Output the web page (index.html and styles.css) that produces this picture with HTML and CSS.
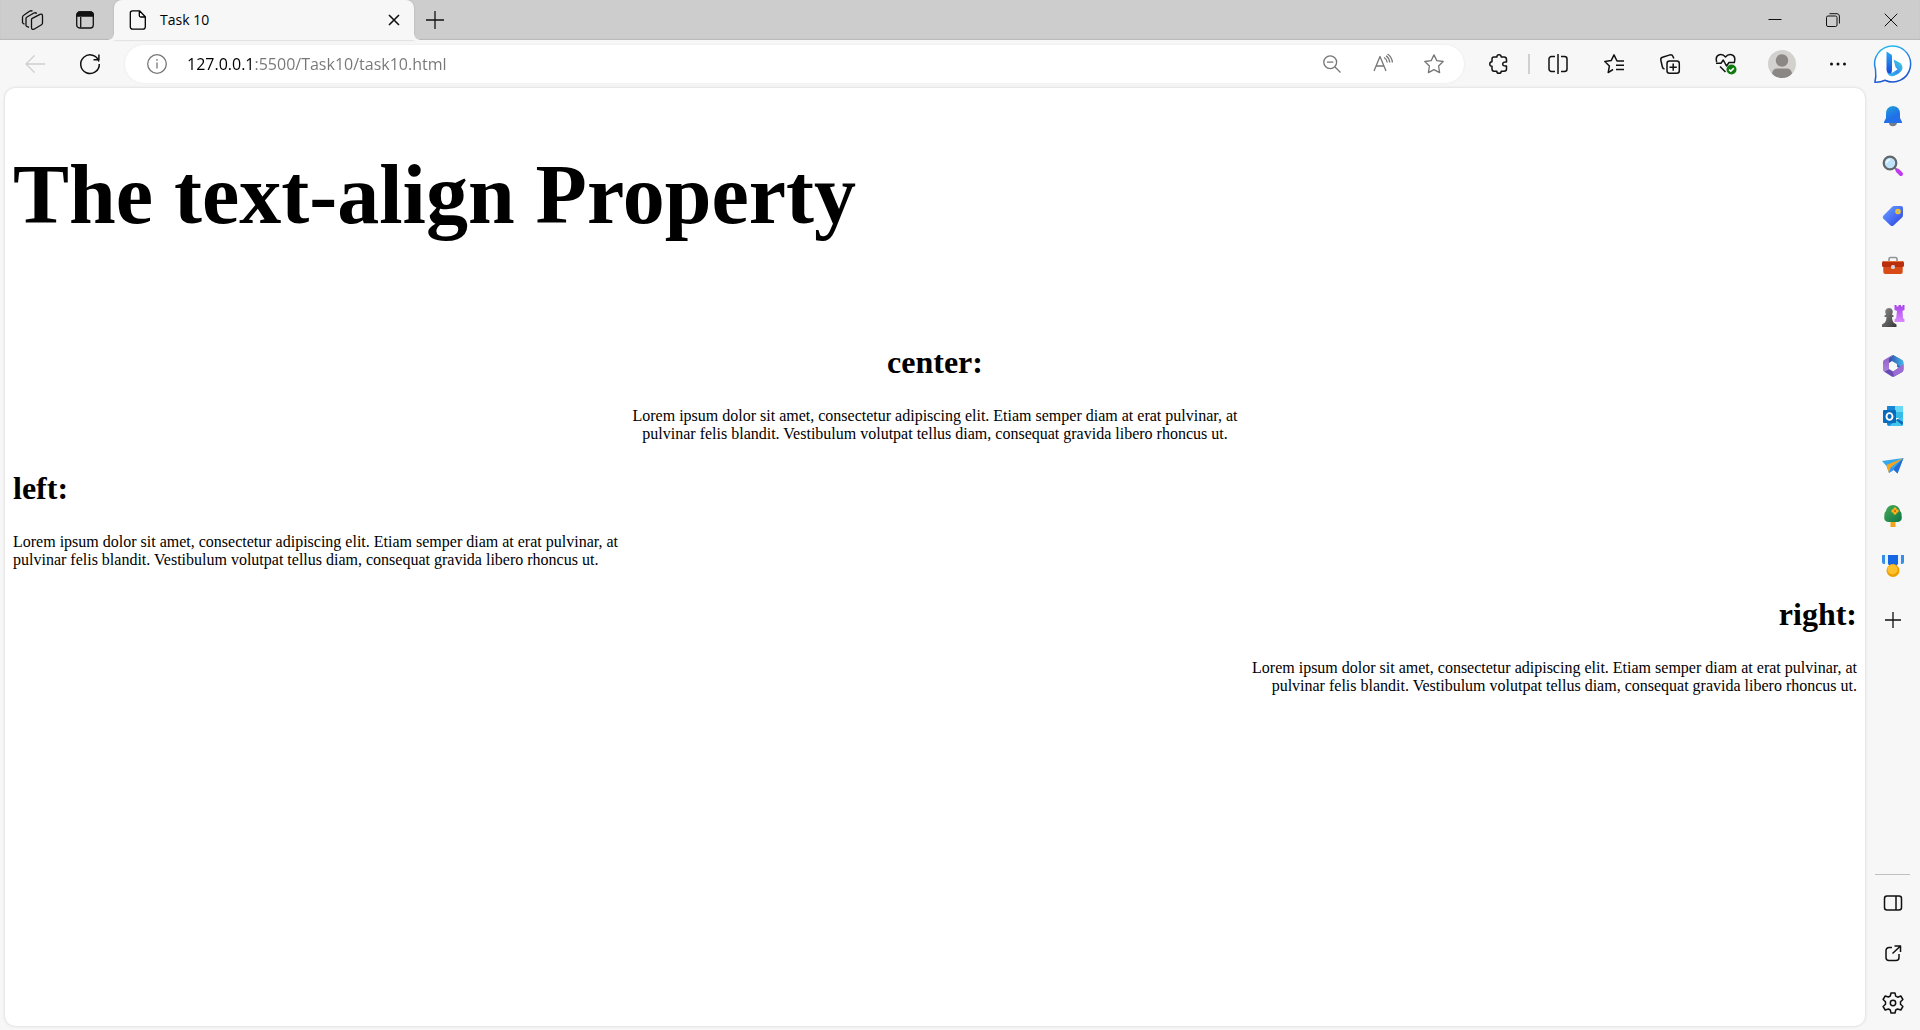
FILE: index.html
```html
<!DOCTYPE html>
<html lang="en">
<head>
<meta charset="utf-8">
<title>Task 10</title>
<link rel="stylesheet" href="styles.css">
</head>
<body>
<header class="tabs">
  <button class="btn tab-tool" aria-label="Workspaces"><svg class="i22" viewBox="0 0 22 22"><path d="M1.500 14V8.500Q1.500 6.700 3.100 6L8.500 2.200Q10 1.400 11.500 2.100M5 17V9.500Q5 8.500 6 8L13 4Q14.500 3.300 15.800 4.500M3.500 15.200 1.500 14M5 17 8 18.300M11.300 9.300 19 5.300Q21.500 4.500 21.500 7V14Q21.500 15.200 20.500 15.800L13 20.200Q10.500 21 10.500 18.500V10.800Q10.500 9.800 11.300 9.300Z"/></svg></button>
  <button class="btn tab-tool" aria-label="Tab actions"><svg class="i20" viewBox="0 0 20 20"><rect x="1.700" y="2" width="16.600" height="16" rx="3"/><path fill="currentColor" d="M2 6V5a3 3 0 0 1 3-3h10a3 3 0 0 1 3 3v1z"/><path d="M5.700 7v10.500"/></svg></button>
  <div class="tab">
    <svg class="i20" viewBox="0 0 20 20"><path d="M4.500.800h7l5.800 6V17a2.200 2.200 0 0 1-2.200 2.200H4.500A2.200 2.200 0 0 1 2.300 17V3A2.200 2.200 0 0 1 4.500.800ZM11.300 1v4.500A1.500 1.500 0 0 0 12.800 7H17"/></svg>
    <span class="tab-title">Task 10</span>
    <button class="btn tab-close" aria-label="Close tab"><svg class="i12" viewBox="0 0 12 12"><path d="m1 1 10 10M11 1 1 11"/></svg></button>
  </div>
  <button class="btn tab-new" aria-label="New tab"><svg class="i18" viewBox="0 0 18 18"><path d="M9 0v18M0 9h18"/></svg></button>
  <div class="window-buttons">
    <button class="btn win" aria-label="Minimize"><svg class="i14 thin" viewBox="0 0 14 14"><path d="M.500 6.500h13"/></svg></button>
    <button class="btn win" aria-label="Restore"><svg class="i14 thin" viewBox="0 0 14 14"><rect x=".500" y="3" width="10.500" height="10.500" rx="1.500"/><path d="M3.500.700H11A2.500 2.500 0 0 1 13.400 3v7.500"/></svg></button>
    <button class="btn win" aria-label="Close"><svg class="i14 thin" viewBox="0 0 14 14"><path d="m.700.700 12.600 12.600M13.300.700.700 13.300"/></svg></button>
  </div>
</header>

<div class="toolbar">
  <button class="btn nav disabled" aria-label="Back" disabled><svg class="i20" viewBox="0 0 20 20"><path d="M20 10H1M9.500 1.500 1 10l8.500 8.500"/></svg></button>
  <button class="btn nav" aria-label="Refresh"><svg class="i20" viewBox="0 0 20 20"><path stroke-width="1.500" d="M18.900 7.500A9.300 9.300 0 1 0 19.300 10M18.900.500v5.300H13.500"/></svg></button>
  <div class="address">
    <svg class="i20 muted" viewBox="0 0 20 20"><circle cx="10" cy="10" r="9.300"/><path d="M10 8.500V14.500M10 5v1.800"/></svg>
    <input class="url" type="text" aria-label="Address" spellcheck="false" value="127.0.0.1:5500/Task10/task10.html">
    <button class="btn field-btn" aria-label="Zoom"><svg class="i18" viewBox="0 0 18 18"><circle cx="7.200" cy="7.200" r="6.400"/><path d="M4 7.200h6.400M12 12l5.500 5.500"/></svg></button>
    <button class="btn field-btn" aria-label="Read aloud"><svg class="i20" viewBox="0 0 20 20"><path d="M1 17 7 2.500 13 17M3.200 12h7.600M11 3.500Q13.800 5 14.300 8.500M13 1.800Q16.300 4 16.800 8.500M14.500 0Q19 3 19.400 8.500"/></svg></button>
    <button class="btn field-btn" aria-label="Add to favorites"><svg class="i20" viewBox="0 0 20 20"><path d="m10 .900 2.800 5.700 6.400.900-4.600 4.500 1 6.600L10 15.600l-5.600 3 1-6.600L.800 7.500l6.400-.900Z"/></svg></button>
  </div>
  <button class="btn extension" aria-label="Extensions"><svg class="i20 dark" viewBox="0 0 20 20"><path d="M5 3h3Q7.800.800 10 .800T12.200 3H15Q17.500 3 17.500 5.500V8Q13.700 7.600 13.700 10T17.500 12V15Q17.500 17.200 15 17.200H12.200Q12.200 19.300 10 19.300T7.800 17.200H5Q3 17.200 3 15V12.300Q.800 12.300.800 10T3 7.700V5Q3 3 5 3Z"/></svg></button>
  <button class="btn tool" aria-label="Split screen"><svg class="i20 dark" viewBox="0 0 20 20"><path d="M10 0v20M7 2.500H3.500A2.500 2.500 0 0 0 1 5v10a2.500 2.500 0 0 0 2.500 2.500H7M13 2.500h3.500A2.500 2.500 0 0 1 19 5v10a2.500 2.500 0 0 1-2.500 2.500H13"/></svg></button>
  <button class="btn tool" aria-label="Favorites"><svg class="i20 dark" viewBox="0 0 20 20"><path d="M18.500 7H13L10 .900 7.200 6.600.800 7.500 5.400 12l-1.200 6.600L9 15.500M12 11.200h8M12 15.500h8M15 7h5"/></svg></button>
  <button class="btn tool" aria-label="Collections"><svg class="i20 dark" viewBox="0 0 20 20"><rect x="7" y="7" width="12.300" height="12.300" rx="2.500"/><path d="M13.200 9.500v7.300M9.500 13.200h7.300M4.500 15Q2.800 14.800 2.400 13L.800 6Q.500 4 2.500 3.300L10 .900Q12.200.500 13 2.500L13.800 4.500"/></svg></button>
  <button class="btn tool" aria-label="Browser essentials"><svg class="i22 dark" viewBox="0 0 22 22"><path d="M1.600 9Q0 3 4.500 1.700 8 .900 10.500 4 13 .900 16.500 1.700 21 3 19.500 9M1 10.200H6L8.300 7 11.500 13 14 9.500H20M5 13.500 10.500 19"/><circle class="green" cx="16.500" cy="16.500" r="5"/><path class="white-line" d="m14.200 16.600 1.600 1.500 3-3"/></svg></button>
  <button class="btn tool" aria-label="Profile"><svg class="i28 art" viewBox="0 0 28 28"><circle cx="14" cy="14" r="14" fill="#d3d1ce"/><circle cx="14" cy="10.500" r="6.200" fill="#8b8785"/><path fill="#8b8785" d="M4 23.500Q5 18.500 9 18.500H19Q23 18.500 24 23.500Q20 28 14 28T4 23.500Z"/></svg></button>
  <button class="btn tool" aria-label="Settings and more"><svg class="i18 art" viewBox="0 0 18 18"><circle cx="2.500" cy="9" r="1.500"/><circle cx="9" cy="9" r="1.500"/><circle cx="15.500" cy="9" r="1.500"/></svg></button>
  <button class="btn bing" aria-label="Bing chat"><svg class="i38 art" viewBox="0 0 38 38"><defs><linearGradient id="ring" x1="0" y1="0" x2=".300" y2="1"><stop stop-color="#2bc8ee"/><stop offset=".500" stop-color="#2681e8"/><stop offset="1" stop-color="#1b55cf"/></linearGradient><linearGradient id="bstem" x2="0" y2="1"><stop stop-color="#2aa9f4"/><stop offset="1" stop-color="#1749d8"/></linearGradient><linearGradient id="bbowl" x1="0" y1="1" x2="1" y2="0"><stop stop-color="#39c9ee"/><stop offset=".450" stop-color="#2f8ff0"/><stop offset="1" stop-color="#46dbd8"/></linearGradient></defs><path fill="#fff" stroke="url(#ring)" stroke-width="1.500" d="M19 .900A18 18 0 1 1 11 35.200Q6 37.500.900 37.200 2.400 32 1.500 24.500A18 18 0 0 1 19 .900Z"/><path fill="url(#bbowl)" d="M19.500 14.500 25.500 17.500Q28.500 19.500 28.500 23 28 27 22 30 17.500 32.500 14.500 30 12.700 28.300 13.200 25L18 28 23.500 24.500 21.500 22Z"/><path fill="url(#bstem)" d="M12.500 6.500 16.500 9Q18 9.600 18 11V24.500Q18 29 15.500 28.500 12.500 27.500 12.500 24.500Z"/></svg></button>
</div>

<div class="content">
  <main class="page">
    <h1 class="title">The text-align Property</h1>
    <section class="sample center"><h2>center:</h2><p>Lorem ipsum dolor sit amet, consectetur adipiscing elit. Etiam semper diam at erat pulvinar, at pulvinar felis blandit. Vestibulum volutpat tellus diam, consequat gravida libero rhoncus ut.</p></section>
    <section class="sample left"><h2>left:</h2><p>Lorem ipsum dolor sit amet, consectetur adipiscing elit. Etiam semper diam at erat pulvinar, at pulvinar felis blandit. Vestibulum volutpat tellus diam, consequat gravida libero rhoncus ut.</p></section>
    <section class="sample right"><h2>right:</h2><p>Lorem ipsum dolor sit amet, consectetur adipiscing elit. Etiam semper diam at erat pulvinar, at pulvinar felis blandit. Vestibulum volutpat tellus diam, consequat gravida libero rhoncus ut.</p></section>
  </main>
  <aside class="sidebar">
    <button class="btn side" aria-label="Notifications"><svg class="i22 art" viewBox="0 0 22 22"><defs><linearGradient id="bell" x2=".600" y2="1"><stop stop-color="#1ca5d4"/><stop offset=".700" stop-color="#2170ea"/></linearGradient></defs><path fill="#777c83" d="M7 18h8q-.500 3-4 3.200T7 18Z"/><path fill="url(#bell)" d="M11 1q7 .500 7 8v4l2 4v1H2v-1l2-4V9q0-7.500 7-8Z"/></svg></button>
    <button class="btn side" aria-label="Search"><svg class="i22 art" viewBox="0 0 22 22"><path stroke="#777" stroke-width="2" d="m12 12 3 3"/><path stroke="#bf3bed" stroke-width="4" stroke-linecap="round" d="m15.500 15.500 3.500 3.500"/><circle cx="8" cy="8" r="6.300" fill="#bfe3fb" stroke="#62666a" stroke-width="2.200"/><path stroke="#eef9ff" stroke-width="1.500" fill="none" d="M4.500 8Q5 5 8 4.500"/></svg></button>
    <button class="btn side" aria-label="Shopping"><svg class="i22 art" viewBox="0 0 22 22"><defs><linearGradient id="tag" x1="0" x2="1" y2="1"><stop stop-color="#6aa7ff"/><stop offset=".600" stop-color="#4668f2"/><stop offset="1" stop-color="#2344ce"/></linearGradient></defs><path fill="url(#tag)" d="M12 1h7q2 0 2 2v7q0 1.500-1 2.500L11.500 20.500q-1.500 1-3 0L1.200 13.500q-1-1.500.300-3L10 2q1-1 2-1Z"/><circle cx="16" cy="6.500" r="2" fill="#a9b6bc" stroke="#f7c61b" stroke-width="1.600"/></svg></button>
    <button class="btn side" aria-label="Tools"><svg class="i22 art" viewBox="0 0 22 22"><path fill="none" stroke="#8f9499" stroke-width="1.600" d="M7 7V4q0-1.500 1.500-1.500h5Q15 2.500 15 4v3"/><path fill="#d84b16" d="M1.300 11h19.400v6q0 2-2 2H3.300q-2 0-2-2Z"/><path fill="#b92f0e" d="M2 6h18q2 0 2 2v3q0 1-2 1H2q-2 0-2-1V8q0-2 2-2Z"/><path fill="#e86b32" d="M2 6h18v1H2Z"/><rect x="9" y="10" width="4" height="4" rx="1.500" fill="#d0d2d5"/></svg></button>
    <button class="btn side" aria-label="Games"><svg class="i22 art" viewBox="0 0 22 22"><defs><linearGradient id="rook" y2="1" x2="0"><stop stop-color="#a842ec"/><stop offset="1" stop-color="#d98aff"/></linearGradient><linearGradient id="pawn" x1="0" x2="1" y2="1"><stop stop-color="#8d8d8d"/><stop offset="1" stop-color="#383838"/></linearGradient></defs><path fill="url(#rook)" d="M12.500 0h2v1.500h2V0h2.500v1.500h1.500V0h2v5l-2 1 .500 7 1.500 1.500V17h-10v-2.500l1.700-1.500L15 6l-2.500-1Z"/><path fill="url(#pawn)" d="M7 3a4 4 0 0 1 3 6.500l1.500 1v1.500H10q0 4 1.500 5.500l3 2V22H0v-2.500l3-2Q4.500 16 4.500 12H2.500v-1.500l1.500-1A4 4 0 0 1 7 3Z"/></svg></button>
    <button class="btn side" aria-label="Microsoft 365"><svg class="i22 art" viewBox="0 0 22 22"><defs><linearGradient id="ma" x2="1"><stop stop-color="#314caa"/><stop offset="1" stop-color="#43b9e9"/></linearGradient><linearGradient id="mb" x2="0" y2="1"><stop stop-color="#8f5bc5"/><stop offset="1" stop-color="#ae83dc"/></linearGradient></defs><path fill="#346ec5" d="M11 0 20 5q1.300.800 1.300 2v8L15 12V8.500L11 6Z"/><path fill="url(#mb)" d="M1 7q0-1.300 1-2L9.500.400Q11 0 11 0L7 3.500V14L2 16.500q-1-.500-1-1.500Z"/><path fill="#684bb4" d="M2 16.500 7 14l4 2.500 4-2.500 6.300-5V15q0 1.300-1 2l-8 4.500q-1.300.600-2.600 0Z"/><path fill="url(#ma)" d="M7 3.500 11 0l9 5q1.300.800 1.300 2v6L15 9.500 10 6 7 8Z"/><path fill="#9b6cd1" d="m11 16.500 4-2.500 6.300-5v6q0 1.300-1 2L12 21.500Z"/><path fill="#f7f7f7" d="m11 6.800 4 2.400v4L11 15.500l-4-2.300v-4Z"/></svg></button>
    <button class="btn side" aria-label="Outlook"><svg class="i22 art" viewBox="0 0 22 22"><path fill="#36bce9" d="M6 1h14q1 0 1 1v11H5V2q0-1 1-1Z"/><path fill="#1686d5" d="M5 2q0-1 1-1h7v6H5Z"/><path fill="#67d9f7" d="M13 1h7q1 0 1 1v5h-8Z"/><path fill="#1485d4" d="M5 11 13 16l8-5v8q0 2-2 2H7q-2 0-2-2Z"/><path fill="#42c5ec" d="M21 11v8q0 2-2 2H7l6-5Z"/><path fill="#1168ba" d="m14 15 6 5q1-1 1-2v-1l-5-3Z"/><rect x="1" y="5" width="13" height="13" rx="1" fill="#086bbc"/><ellipse cx="7.500" cy="11.500" rx="3" ry="3.400" fill="none" stroke="#fff" stroke-width="1.900"/></svg></button>
    <button class="btn side" aria-label="Drop"><svg class="i22 art" viewBox="0 0 22 22"><path fill="#35a8ec" d="M0 6 21.500 3 15.500 18.500 11 14 7 18 4.500 11Z"/><path fill="#246dd6" d="m21.500 3-6 15.500L11 14Z"/><path fill="#f9a51a" d="M4.500 10 21.500 3 9 12 7 18Z"/><path fill="#3b92f1" d="m9 12 3 3-5 3Z"/></svg></button>
    <button class="btn side" aria-label="E-tree"><svg class="i22 art" viewBox="0 0 22 22"><defs><linearGradient id="tree" x2="1" y2="1"><stop stop-color="#48ad55"/><stop offset="1" stop-color="#0b7448"/></linearGradient></defs><path fill="#f2a21b" d="M8.500 15h5v7h-5Z"/><path fill="url(#tree)" d="M11 0Q17 .500 18 6q2 2 1.500 4Q21 17 15 17H7Q1 17 2.500 10 2 8 4 6 5 .500 11 0Z"/><circle cx="13" cy="4" r="1.700" fill="#ffb51b"/><circle cx="13" cy="8" r="1.700" fill="#ffb51b"/><circle cx="11" cy="6" r="1.700" fill="#ffb51b"/><circle cx="15" cy="6" r="1.700" fill="#ffb51b"/><circle cx="13" cy="6" r="1.200" fill="#dc6c08"/></svg></button>
    <button class="btn side" aria-label="Rewards"><svg class="i22 art" viewBox="0 0 22 22"><path fill="#378ee6" d="M0 0h22v7q0 2-2 2H2Q0 9 0 7Z"/><path fill="#e8f3ff" d="M3 0h3v9H3ZM16 0h3v9h-3Z"/><path fill="#1767e5" d="M6 0h10v9l-3 3H9L6 9Z"/><circle cx="11" cy="15.500" r="6.500" fill="#eaa000"/><circle cx="10.500" cy="14.500" r="5" fill="#ffc12b"/></svg></button>
    <button class="btn side add" aria-label="Customize"><svg class="i16" viewBox="0 0 16 16"><path d="M8 0v16M0 8h16"/></svg></button>
    <div class="side-end">
      <button class="btn side" aria-label="Side panel"><svg class="i20 dark" viewBox="0 0 20 20"><rect x="1.500" y="3" width="17" height="14" rx="2.500"/><path d="M13 3v14"/></svg></button>
      <button class="btn side" aria-label="Open link"><svg class="i20 dark" viewBox="0 0 20 20"><path d="M9 4.500H6A3 3 0 0 0 3 7.500v7A3 3 0 0 0 6 17.500h7a3 3 0 0 0 3-3V11M9.500 10.500 17.500 3M11.500 3h6v6"/></svg></button>
      <button class="btn side" aria-label="Settings"><svg class="i22 dark" viewBox="0 0 22 22"><path d="M9 1h4l.700 3.200 1.900 1L18.800 4l2.100 3.500-2.400 2.300v2.400l2.400 2.300-2.100 3.500-3.200-1-1.900 1L13 21H9l-.700-3-1.900-1-3.200 1-2.100-3.500 2.400-2.300V9.800L1.100 7.500 3.200 4l3.200 1 1.900-1Z"/><circle cx="11" cy="11" r="2.700"/></svg></button>
    </div>
  </aside>
</div>
</body>
</html>
```
FILE: styles.css
```css
* { box-sizing: border-box; }

body {
  margin: 0;
  min-height: 100vh;
  display: flex;
  flex-direction: column;
  background: #f7f7f7;
  color: #000;
  font-family: "Open Sans", "Noto Sans", sans-serif;
}

svg {
  flex: none;
  display: block;
  overflow: visible;
  fill: none;
  stroke: currentColor;
  stroke-width: 1.3;
  stroke-linejoin: round;
}
.art { fill: currentColor; stroke: none; }
.thin { stroke-width: 1; }
.dark { stroke-width: 1.5; }
.green { fill: #107c10; stroke: none; }
.white-line { stroke: #fff; }
.muted { color: #767676; }
.i12 { width: 12px; height: 12px; }
.i14 { width: 14px; height: 14px; }
.i16 { width: 16px; height: 16px; }
.i18 { width: 18px; height: 18px; }
.i20 { width: 20px; height: 20px; }
.i22 { width: 22px; height: 22px; }
.i28 { width: 28px; height: 28px; }
.i38 { width: 38px; height: 38px; }

.btn {
  flex: none;
  display: flex;
  align-items: center;
  justify-content: center;
  padding: 0;
  border: 0;
  background: none;
  color: #111;
}

/* Tab strip */
.tabs {
  display: flex;
  height: 40px;
  padding-left: 5px;
  background: #cdcdcd;
  box-shadow: inset 0 -1px 1px #b9b9b9;
}
.tab-tool { width: 53px; }
.tab {
  position: relative;
  display: flex;
  align-items: center;
  width: 300px;
  margin-left: 3px;
  padding: 0 14px;
  border-radius: 8px 8px 0 0;
  background: #f7f7f7;
  box-shadow: 0 0 2px #aaa;
}
/* Curved feet where the tab meets the toolbar */
.tab::before,
.tab::after {
  content: "";
  position: absolute;
  bottom: 0;
  width: 5px;
  height: 5px;
}
.tab::before {
  right: 100%;
  background: radial-gradient(circle at 0 0, #cdcdcd 4px, #f7f7f7 5px);
}
.tab::after {
  left: 100%;
  background: radial-gradient(circle at 100% 0, #cdcdcd 4px, #f7f7f7 5px);
}
.tab-title {
  flex: 1;
  margin-left: 12px;
  font-size: 14px;
  line-height: 20px;
}
.tab-close { width: 12px; height: 12px; }
.tab-close svg { stroke-width: 1.6; }
.tab-new { width: 42px; }
.window-buttons { display: flex; margin-left: auto; }
.win { width: 58px; }

/* Address row */
.toolbar {
  display: flex;
  align-items: center;
  height: 48px;
  padding-left: 7px;
  background: #f7f7f7;
}
.nav { width: 55px; height: 40px; }
.disabled { color: #cfcfcf; }
.address {
  flex: 1;
  display: flex;
  align-items: center;
  height: 38px;
  margin: 0 5px 0 8px;
  padding: 0 5px 0 22px;
  border-radius: 19px;
  background: #fff;
  box-shadow: 0 0 3px #e8e8e8;
}
.url {
  flex: 1;
  min-width: 0;
  margin-left: 20px;
  padding: 0;
  border: 0;
  outline: 0;
  background: linear-gradient(90deg, #000 66px, #767676 66px);
  -webkit-background-clip: text;
  background-clip: text;
  color: transparent;
  font: 16px/24px "Open Sans", "Noto Sans", sans-serif;
}
.field-btn { width: 51px; height: 36px; color: #767676; }
.extension {
  width: 61px;
  height: 20px;
  border-right: 2px solid #d0d0d0;
}
.tool { width: 56px; height: 40px; }
.bing { width: 54px; height: 40px; }

/* Viewport and sidebar */
.content { flex: 1; display: flex; }
.page {
  flex: 1;
  margin: 0 0 4px 5px;
  padding: 8px;
  border-radius: 10px;
  background: #fff;
  box-shadow: 0 0 3px #ccc;
  font: 16px/18px "Liberation Serif", "Times New Roman", serif;
}
.title {
  margin: 51px 0 101px;
  font-size: 84px;
  line-height: 96px;
}
.sample { margin-bottom: 18px; }
.sample h2 {
  margin: 0 0 27px;
  font-size: 32px;
  line-height: 36px;
}
.sample p { width: 33.333%; margin: 0 0 27px; }
.center { text-align: center; }
.center p { margin-left: auto; margin-right: auto; }
.right { text-align: right; }
.right p { margin-left: auto; }

.sidebar {
  flex: none;
  display: flex;
  flex-direction: column;
  width: 55px;
  padding: 3px 0 2px;
}
.side { width: 100%; height: 50px; }
.add { margin-top: 4px; }
.side-end {
  margin-top: auto;
  padding-top: 4px;
  background: linear-gradient(#c0c0c0, #c0c0c0) 10px 0 / 35px 1px no-repeat;
}
```
